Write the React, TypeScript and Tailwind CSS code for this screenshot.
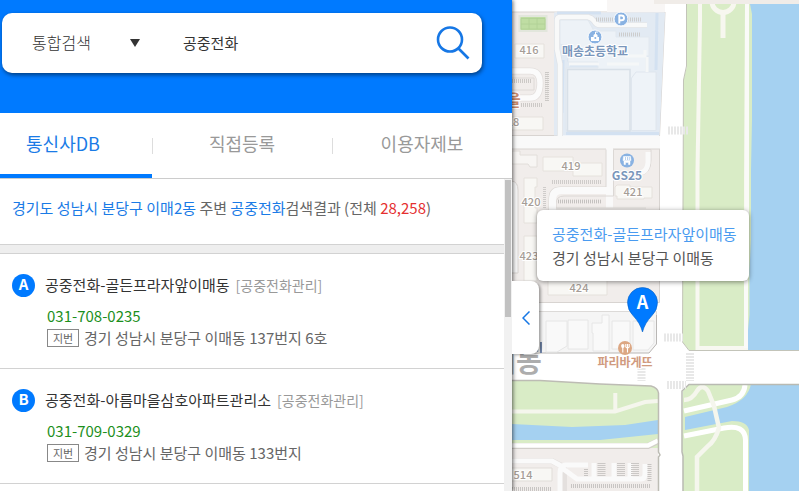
import { useState } from "react";

type Place = {
  mark: string;
  name: string;
  category: string;
  phone: string;
  address: string;
};

const places: Place[] = [
  {
    mark: "A",
    name: "공중전화-골든프라자앞이매동",
    category: "[공중전화관리]",
    phone: "031-708-0235",
    address: "경기 성남시 분당구 이매동 137번지 6호",
  },
  {
    mark: "B",
    name: "공중전화-아름마을삼호아파트관리소",
    category: "[공중전화관리]",
    phone: "031-709-0329",
    address: "경기 성남시 분당구 이매동 133번지",
  },
];

const tabs = ["통신사DB", "직접등록", "이용자제보"];

function SearchBar() {
  const [keyword, setKeyword] = useState("공중전화");
  return (
    <header className="h-[113px] bg-[#007aff] pt-[13px] pl-0.5 pr-[30px]">
      <form
        className="flex h-[60px] items-center rounded-[10px] bg-white shadow-[1px_2px_4px_rgba(0,0,0,0.5)]"
        onSubmit={(e) => e.preventDefault()}
      >
        <div className="relative ml-[30px] w-[110px] pb-0.5">
          <select
            aria-label="검색 구분"
            className="w-full appearance-none bg-transparent text-base font-light text-[#333] outline-none"
          >
            <option>통합검색</option>
          </select>
          <svg
            className="pointer-events-none absolute top-1/2 right-0.5 h-2 w-2.5 -translate-y-1/2"
            viewBox="0 0 10 8"
          >
            <path d="M0 0h10L5 8z" fill="#333" />
          </svg>
        </div>
        <input
          aria-label="검색어"
          className="ml-[41px] min-w-0 flex-1 bg-transparent text-[15px] text-[#333] outline-none"
          value={keyword}
          onChange={(e) => setKeyword(e.target.value)}
        />
        <button type="submit" aria-label="검색" className="mr-3">
          <svg className="size-9" viewBox="0 0 36 36" fill="none" stroke="#1677e5" strokeWidth="2.6">
            <circle cx="16" cy="14.5" r="12" />
            <path d="M24.5 23.5L34.5 33.5" />
          </svg>
        </button>
      </form>
    </header>
  );
}

function Tabs() {
  const [active, setActive] = useState(0);
  return (
    <nav className="flex h-[66px] border-b border-[#ccc] text-lg">
      {tabs.map((tab, i) => (
        <button
          key={tab}
          onClick={() => setActive(i)}
          className={`relative flex items-center justify-center ${
            i === 0 ? "w-[152px] pr-[26px]" : "flex-1"
          } ${
            active === i
              ? "border-b-4 border-[#007aff] pb-px text-[#1a7be6]"
              : "pb-[5px] text-[#999]"
          }`}
        >
          {i > 0 && <span className="absolute top-[25px] left-0 h-4 w-px bg-[#ddd]" />}
          {tab}
        </button>
      ))}
    </nav>
  );
}

function PlaceItem({ place }: { place: Place }) {
  return (
    <li className="border-b border-[#d2d2d2] pt-4 pr-3 pb-[19px] pl-3">
      <div className="flex h-[30px] items-center">
        <span className="flex size-[23px] items-center justify-center rounded-full bg-[#007aff] pb-px text-[15px] font-bold text-white">
          {place.mark}
        </span>
        <a href="#" className="ml-2.5 text-[15px] text-[#333]">
          {place.name}
        </a>
        <span className="ml-1.5 text-sm text-[#999]">{place.category}</span>
      </div>
      <div className="mt-[5px] pl-[35px] text-[15px]">
        <p className="leading-[22px] text-[#1c8f1c]">{place.phone}</p>
        <p className="flex h-[22px] items-center text-[#666]">
          <span className="mr-[5px] flex h-[18px] w-8 items-center justify-center border border-[#888] text-[11px]">
            지번
          </span>
          {place.address}
        </p>
      </div>
    </li>
  );
}

function SidePanel() {
  return (
    <aside className="relative z-10 flex w-[512px] shrink-0 flex-col bg-white shadow-[1px_0_4px_rgba(0,0,0,0.6)]">
      <SearchBar />
      <Tabs />
      <div className="flex min-h-0 flex-1">
        <div className="min-w-0 flex-1 overflow-hidden">
          <p className="flex h-[65px] items-center pb-1.5 pl-3 text-[15px] whitespace-pre text-[#666]">
            <span className="text-[#1a7be6]">경기도 성남시 분당구 이매2동</span> 주변{" "}
            <span className="text-[#1a7be6]">공중전화</span>검색결과 (전체{" "}
            <span className="text-[#e53030]">28,258</span>)
          </p>
          <div className="h-2.5 border-y border-[#d2d2d2] bg-[#eee]" />
          <ul>
            {places.map((place) => (
              <PlaceItem key={place.mark} place={place} />
            ))}
          </ul>
        </div>
        <div className="w-2 bg-[#f1f1f1] px-px pt-px">
          <div className="h-[137px] bg-[#c1c1c1]" />
        </div>
      </div>
    </aside>
  );
}

function MapTiles() {
  return (
    <svg
      className="absolute inset-0 h-full w-full"
      viewBox="512 0 287 491"
      preserveAspectRatio="xMinYMin slice"
      fill="none"
    >
      <rect x="512" width="600" height="491" fill="#fff" />

      {/* apartment blocks */}
      <path d="M512 12H555V135.500H512z" fill="#f1edeb" />
      <path d="M512 149H660V302.500H512z" fill="#f1edeb" />
      <path d="M512 136H660V149H512z" fill="#f9f9f9" />
      <path d="M512 12H665L659.500 136M659.500 149V302.500H512M512 149H606M613 149H660M512 135.500H562" stroke="#d8d4d1" />

      {/* school */}
      <path d="M554 12.500H665L659.500 135.500H554z" fill="#e2eaf3" />
      <path d="M557 13H601M657 13L656 70M563 60L562 113M566 133.500H659M567 60H640M570 65H639" stroke="#d3e1f1" strokeWidth="3" />
      <path d="M560 20H588L594 31H616V37H649V56H646V72H656V130H566V68H598V62H568V47L560 44z" fill="#edf2f7" stroke="#e1e8ef" />
      <path d="M567.500 69.500H630V131H567.500z" fill="#eff3f7" stroke="#d8e0e8" strokeWidth="1.500" />
      <path d="M631.500 78L636 72H656V130.500H631.500z" fill="#eef3f8" stroke="#dfe6ee" />
      <path d="M560 136V64L557 49V20Q557 17 561 17H588Q592 18 594 21Q596 25 600 25H647" stroke="#dfe2e6" strokeWidth="6" />
      <path d="M560 139V64L557 49V20Q557 17 561 17H588Q592 18 594 21Q596 25 600 25H647" stroke="#f8f9f9" strokeWidth="4.600" />
      <path d="M569 64H599M607 64H639M625 56H645V50M647 57V72" stroke="#f5f7f8" strokeWidth="3" />
      <path d="M596 19.500H642M619 34.500H640" stroke="#cdcdcd" strokeWidth="4" strokeDasharray="1 1" />

      {/* field and top left buildings */}
      <rect x="519.500" y="16" width="27" height="15" fill="#bfdda3" stroke="#e2e6dc" strokeWidth="2" />
      <path d="M521 18.500H545V29H521zM521 24H545M529 18V29M537 18V29" stroke="#b0d096" strokeWidth=".8" />
      <path d="M515 44H544V58H515z" fill="#f8f7f4" stroke="#e5e1dc" />
      <path d="M512 71H530Q540 71 540 83Q540 98 530 98H512" stroke="#e4e0de" strokeWidth="7" />
      <path d="M512 71H530Q540 71 540 83Q540 98 530 98H512" stroke="#fbfbfb" strokeWidth="5.500" />
      <path d="M512 81H532" stroke="#ccc9c6" strokeWidth="4" strokeDasharray="1 1" />
      <path d="M512 78H534V90H512" stroke="#dedad7" />
      <path d="M545 86.500H549" stroke="#d2cfcc" strokeWidth="29" strokeDasharray="1 1" opacity=".3" />
      <path d="M547 72V101" stroke="#ccc9c6" strokeWidth="4" strokeDasharray="1 1" />
      <path d="M521 105H542" stroke="#ccc9c6" strokeWidth="4" strokeDasharray="1 1" />
      <path d="M512 117H543V130H512" fill="#f8f7f4" stroke="#e5e1dc" />

      {/* middle block */}
      <path d="M512 151H520V155H537V167H530L528 164H512z" fill="#f7f5f3" stroke="#e2deda" />
      <path d="M543 157H573V163H602V176H573V171H543z" fill="#f8f7f4" stroke="#e6e2dd" />
      <path d="M614 149.500H651V160Q651 174 640 175" stroke="#dcd8d5" />
      <path d="M648 152V163Q647 172 640 173" stroke="#fafafa" strokeWidth="5" />
      <path d="M606 148H613V208H606z" fill="#f9f9f9" />
      <path d="M606 149.500V187H560Q549 187 549 198V210M613.500 149.500V196H564Q556 196 556 204V208H646" stroke="#dcd8d5" />
      <path d="M610 190.500H561Q552.500 190.500 552.500 200V212" stroke="#fafafa" strokeWidth="7" />
      <path d="M552 182H602M558 201.500H602" stroke="#cfccca" strokeWidth="4" strokeDasharray="1 1" />
      <path d="M558 201.500H602" stroke="#c4c1bf" strokeWidth="3" strokeDasharray="1 1" />
      <path d="M544.500 187V209" stroke="#cfccca" strokeWidth="3" strokeDasharray="1 1" />
      <path d="M617 185H630V187H647V187H652V198H644V199H617V196H615V187z" fill="#f8f7f4" stroke="#e5e1dc" />
      <path d="M524 178H537V187H535V208H537V223H524z" fill="#f8f7f4" stroke="#e5e1dc" />
      <path d="M524 236H537V281H524z" fill="#f8f7f4" stroke="#e5e1dc" />
      <path d="M512 181Q518 182 518 190V273H512" fill="#f7f7f7" stroke="#d7d3d0" />
      <path d="M548 280H607V295H548z" fill="#f8f7f4" stroke="#e5e1dc" />

      {/* shops by the crossing */}
      <path d="M512 311.500H656.500V344L649 353H512z" fill="#f5f5f5" />
      <path d="M512 311.500H656.500V316" stroke="#dcdad8" />
      <path d="M656.500 315V344L649 353H512" stroke="#b9b7b5" />
      <path d="M546 321H567V346L557 352H546zM568 320H588V349H568zM592 323H602V315H609V351H593V333H592zM612 321H630V349H612zM633 321H654V343L648 350H633z" fill="#f9f9f9" stroke="#e6e6e6" />
      <path d="M541 342V353" stroke="#7185a8" strokeWidth="2" />

      {/* park and water on the right */}
      <path d="M607 0H665V12H607z" fill="#f8f6f5" />
      <path d="M686.500 4H760V350H689L682.500 342V270L683.500 80L687 66z" fill="#d9ecc6" />
      <path d="M686.500 4V66L683.500 80L682.500 342L689 350.500H1100" stroke="#c3c4b9" />
      <path d="M750 4H1100V350H748V330L749.500 315V270L751 240V170L752 120V14z" fill="#a5d1f1" />
      <path d="M700 4V20L699 80L697.500 170V348H746V180L747 4" stroke="#f8f8f1" strokeWidth="4" />
      <circle cx="723" cy="1.500" r="11" stroke="#f7f7ef" strokeWidth="5" />
      <path d="M723 12V38" stroke="#f7f7ef" strokeWidth="5" />
      <path d="M747 4V270M746 270V348" stroke="#fafaf8" strokeWidth="4" />
      <path d="M654 0H1100V4H654z" fill="#f0ece8" />

      {/* lower right park */}
      <path d="M683 391L689 384.500H1100V491H683V454L682 450z" fill="#d9ecc6" />
      <path d="M751 384H1100V491H749V430Q747 421 732 421L685 430V417L727 407Q748 400 751 384z" fill="#a5d1f1" />
      <path d="M684 411L732 400Q744 397 745 385M684 436L724 428Q745 424 745.500 440V491" stroke="#fff" strokeWidth="5" />
      <path d="M684 400Q692 400 697 391Q702 383 708 391L714 406L719 428Q715 441 708 446L697 457V491" stroke="#f5f6ed" strokeWidth="4.500" />
      <path d="M683 491V456L682 452V391L689 384.500H1100" stroke="#b9bab2" strokeWidth="1.500" />

      {/* lower left park */}
      <path d="M512 380.500H540L600 384L651 386Q658 388 658.500 393V448H512z" fill="#d9ecc6" />
      <path d="M512 424L572 427L625 425L658 420V434L600 440H512z" fill="#a5d1f1" />
      <path d="M512 411.500H615L645 402L658 401M615.300 393V411" stroke="#f5f6ed" strokeWidth="4" />
      <path d="M512 448H658V491H512z" fill="#f1edeb" />
      <path d="M512 446H648L658 441" stroke="#d2cfca" strokeWidth="6" />
      <path d="M512 445.500H648L658 440.500" stroke="#fff" strokeWidth="4.500" />
      <path d="M512 380.500H540L600 384L651 386Q658 388 658.500 393V452L660 455L658.500 457V491" stroke="#bdbcb4" strokeWidth="1.500" />
      <path d="M512 461H552L564 467V491" stroke="#e4e0de" strokeWidth="6" />
      <path d="M512 461H552L563 467M560 491V474Q560 465 566 465H588M562 468L577 479H641Q645 479 645 474V464M594 463V478M614 463V478M630 463V478" stroke="#fafafa" strokeWidth="5" />
      <path d="M512 468H552V481H512" fill="#f8f7f4" stroke="#e1ddd9" />
      <path d="M601.500 463V477M621 463V477M635 463V477" stroke="#cbc8c6" strokeWidth="8" strokeDasharray="1 1" />
      <path d="M586 469V476M649.500 464V482" stroke="#c8c5c3" strokeWidth="4" strokeDasharray="1 1" />
      <path d="M571 486H651M512 489H552" stroke="#c8c5c3" strokeWidth="4" strokeDasharray="1 1" />

      {/* crosswalks */}
      <g stroke="#e8e8e8" strokeDasharray="2 1">
        <path d="M668 130.500H688M664 337.500H683M667 385H686" strokeWidth="8" />
        <path d="M690 353V381M641.500 356V381" strokeWidth="8" />
      </g>

      {/* labels */}
      <g
        fontFamily='"Noto Sans CJK KR", sans-serif'
        textAnchor="middle"
        stroke="#fff"
        strokeWidth="2"
        paintOrder="stroke"
        strokeLinejoin="round"
      >
        <g fontSize="11" fontWeight="500" fill="#a69d97">
          <text x="529" y="54">416</text>
          <text x="513" y="126">18</text>
          <text x="571" y="170">419</text>
          <text x="633" y="196">421</text>
          <text x="531" y="206">420</text>
          <text x="529" y="260">423</text>
          <text x="579" y="292">424</text>
          <text x="523" y="479">514</text>
        </g>
        <g fontSize="12" fontWeight="700">
          <text x="595" y="56" fill="#7a96bb">매송초등학교</text>
          <text x="627" y="180" fill="#7a96bb">GS25</text>
          <text x="625" y="367" fill="#d09a7e">파리바게뜨</text>
        </g>
        <text x="506" y="106" fontSize="16" fontWeight="700" fill="#c98a70">마을</text>
        <text x="503" y="372" fontSize="28" fontWeight="700" fill="#adadad">이매동</text>
      </g>

      {/* parking */}
      <circle cx="621" cy="19" r="7" fill="#89b2e2" stroke="#fff" />
      <path d="M619.300 23.500V15.500H621.500Q624 15.500 624 18Q624 20.300 621.500 20.300H619.300" stroke="#fff" strokeWidth="1.900" />
      {/* school */}
      <circle cx="595" cy="37" r="7" fill="#89b2e2" stroke="#fff" />
      <path d="M591 37H593.500V35L595.500 33.500L597.500 35V37H599V41H591z" fill="#fff" />
      <path d="M595.500 35V32H598M595.500 37V39" stroke="#fff" />
      <circle cx="595.300" cy="38" r="1" fill="#89b2e2" />
      {/* convenience store */}
      <circle cx="627" cy="160.500" r="7" fill="#89b2e2" />
      <path d="M623.500 156.500H630.500L631 160.500H623zM624 161H630V164.500H628.500V162.500H625.500V164.500H624z" fill="#fff" stroke="#fff" strokeWidth=".5" />
      <path d="M625.500 157V160M627.500 157V160M629.300 157V160" stroke="#89b2e2" strokeWidth=".6" />
      {/* bakery */}
      <circle cx="625" cy="348" r="7" fill="#dca783" />
      <ellipse cx="622.800" cy="346" rx="1.700" ry="2" fill="#fff" />
      <path d="M622.800 347V352.500M627.500 348V352.500M625.800 344V347Q627.500 349 629.200 347V344M627.500 344V348" stroke="#fff" strokeWidth="1.100" />
    </svg>
  );
}

function MapView() {
  return (
    <main className="relative flex-1 overflow-hidden">
      <MapTiles />

      {/* selected place pin */}
      <svg className="absolute top-[284px] left-[114px] h-[50px] w-8" viewBox="0 0 32 50">
        <path
          d="M16.500 48C15 42 12 37 7 31.500Q1.500 26 1.500 18.500A15 15 0 0 1 31.500 18.500Q31.500 26 26 31.500C21 37 18 42 16.500 48z"
          fill="#007aff"
          stroke="#0a63c4"
          strokeWidth=".6"
        />
        <text
          x="16.500"
          y="25"
          textAnchor="middle"
          fontFamily='"Noto Sans CJK KR", sans-serif'
          fontSize="18"
          fontWeight="700"
          fill="#fff"
        >
          A
        </text>
      </svg>

      <div className="absolute top-[210px] left-[25px] rounded-md bg-white pt-3 pr-3 pb-[11px] pl-[15px] text-[15px] leading-6 whitespace-nowrap text-[#555] shadow-[0_1px_5px_rgba(0,0,0,0.45)]">
        <a href="#" className="block text-[#4a9bf0]">
          공중전화-골든프라자앞이매동
        </a>
        <p>경기 성남시 분당구 이매동</p>
      </div>

      <button
        aria-label="패널 접기"
        className="absolute top-[281px] left-0 z-20 flex h-[73px] w-[27px] items-center justify-center rounded-r-lg bg-white shadow-[2px_1px_3px_rgba(0,0,0,0.35)]"
      >
        <svg className="h-3.5 w-2" viewBox="0 0 8 14" fill="none" stroke="#1677e5" strokeWidth="1.500">
          <path d="M7.500 .5L1 7L7.500 13.500" />
        </svg>
      </button>
    </main>
  );
}

export default function App() {
  return (
    <div className="flex h-screen overflow-hidden bg-white font-['Noto_Sans_CJK_KR',sans-serif]">
      <SidePanel />
      <MapView />
    </div>
  );
}
